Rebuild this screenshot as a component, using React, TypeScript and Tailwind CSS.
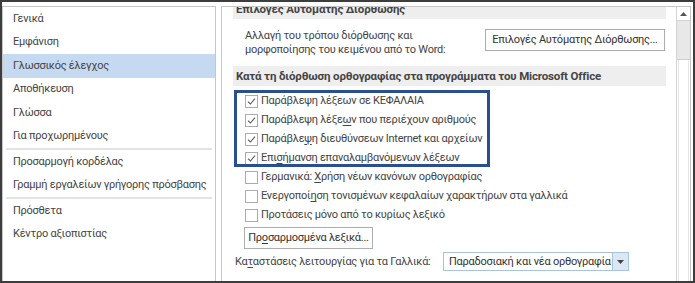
import { ReactNode } from "react";

const NAV_TOP = ["Γενικά", "Εμφάνιση", "Γλωσσικός έλεγχος", "Αποθήκευση", "Γλώσσα", "Για προχωρημένους"];
const NAV_MID = ["Προσαρμογή κορδέλας", "Γραμμή εργαλείων γρήγορης πρόσβασης"];
const NAV_BOT = ["Πρόσθετα", "Κέντρο αξιοπιστίας"];

const U = ({ children }: { children: ReactNode }) => (
  <span className="underline decoration-1 underline-offset-2">{children}</span>
);

const NavItem = ({ label, active }: { label: string; active?: boolean }) => (
  <div className={`flex h-[23.5px] items-center whitespace-nowrap pl-[10px] ${active ? "bg-[#c5d9f1]" : ""}`}>
    {label}
  </div>
);

const Separator = () => <div className="mx-[3px] h-[2px] bg-[#e3e3e3]" />;

const CheckBox = ({ checked }: { checked: boolean }) => (
  <span className="flex h-[13px] w-[13px] shrink-0 items-center justify-center border border-[#ababab] bg-white">
    {checked && (
      <svg width="9" height="9" viewBox="0 0 9 9" fill="none">
        <path d="M1 4.6 L3.4 7 L8 1.6" stroke="#5a5a5a" strokeWidth="1.1" />
      </svg>
    )}
  </span>
);

const CheckRow = ({ checked, children }: { checked: boolean; children: ReactNode }) => (
  <div className="flex h-[19px] items-center gap-[3px] pl-[23px]">
    <CheckBox checked={checked} />
    <span className="whitespace-nowrap">{children}</span>
  </div>
);

const SectionHeader = ({ children, className = "" }: { children: ReactNode; className?: string }) => (
  <div
    className={`ml-[11px] mr-[10px] flex items-center whitespace-nowrap bg-[#eeeeee] pl-[3px] text-[11.5px] font-bold tracking-[-0.15px] text-[#444] ${className}`}
  >
    {children}
  </div>
);

export default function App() {
  return (
    <div
      className="flex h-[283px] w-[695px] overflow-hidden border-2 border-[#3d3d3d] bg-white pt-[4px] text-[11px] leading-[14px] tracking-[-0.25px] text-[#444]"
      style={{ fontFamily: 'Roboto, "Liberation Sans", sans-serif' }}
    >
      {/* navigation list */}
      <div className="h-[300px] w-[214px] shrink-0 border border-[#c6c6c6]">
        {NAV_TOP.map((l) => (
          <NavItem key={l} label={l} active={l === "Γλωσσικός έλεγχος"} />
        ))}
        <Separator />
        {NAV_MID.map((l) => (
          <NavItem key={l} label={l} />
        ))}
        <Separator />
        {NAV_BOT.map((l) => (
          <NavItem key={l} label={l} />
        ))}
      </div>

      {/* options panel */}
      <div className="ml-[5px] mr-[2px] flex h-[300px] flex-1 overflow-hidden border border-[#c6c6c6]">
        <div className="flex-1">
          <SectionHeader className="-mt-[9px] h-[21px]">Επιλογές Αυτόματης Διόρθωσης</SectionHeader>

          <div className="mt-[10px] flex items-start">
            <p className="pl-[23px]">
              Αλλαγή του τρόπου διόρθωσης και
              <br />
              μορφοποίησης του κειμένου από το Word:
            </p>
            <button className="ml-auto mr-[11px] h-[22px] w-[180px] whitespace-nowrap border border-[#adadad] bg-[#fdfdfd] text-[#333]">
              Επιλογές Αυτόματης Διόρθωσης...
            </button>
          </div>

          <SectionHeader className="mt-[9px] h-[20px]">
            Κατά τη διόρθωση ορθογραφίας στα προγράμματα του Microsoft Office
          </SectionHeader>

          <div className="relative mt-[5.5px]">
            <CheckRow checked>Παράβλεψη λέξεων σε ΚΕΦΑΛΑΙΑ</CheckRow>
            <CheckRow checked>
              Παράβλεψη λέξε<U>ω</U>ν που περιέχουν αριθμούς
            </CheckRow>
            <CheckRow checked>
              Παράβλε<U>ψ</U>η διευθύνσεων Internet και αρχείων
            </CheckRow>
            <CheckRow checked>
              Επι<U>σ</U>ήμανση επαναλαμβανόμενων λέξεων
            </CheckRow>
            {/* annotation frame */}
            <div className="pointer-events-none absolute left-[12px] top-[-2px] h-[77px] w-[256px] border-[3px] border-[#2b4f8e]" />
          </div>
          <CheckRow checked={false}>
            Γερμανικά: <U>Χ</U>ρήση νέων κανόνων ορθογραφίας
          </CheckRow>
          <CheckRow checked={false}>
            Ενεργοποί<U>η</U>ση τονισμένων κεφαλαίων χαρακτήρων στα γαλλικά
          </CheckRow>
          <CheckRow checked={false}>Προτάσεις μόνο από το κυρίως λεξικό</CheckRow>

          <button className="ml-[22px] mt-[2.5px] h-[22px] w-[129px] whitespace-nowrap border border-[#adadad] bg-[#fdfdfd] text-[#333]">
            Πρ<U>ο</U>σαρμοσμένα λεξικά...
          </button>

          <div className="mt-[3px] flex items-center">
            <span className="w-[221px] shrink-0 whitespace-nowrap pl-[13px]">
              Κα<U>τ</U>αστάσεις λειτουργίας για τα Γαλλικά:
            </span>
            <div className="flex h-[19px] w-[186px] items-center border border-[#a9c2de] bg-white">
              <span className="flex-1 whitespace-nowrap pl-[5px] text-[#333]">Παραδοσιακή και νέα ορθογραφία</span>
              <span className="flex h-full w-[16px] items-center justify-center border-l border-[#a9c2de] bg-[#dce7f4]">
                <svg width="7" height="4" viewBox="0 0 7 4">
                  <path d="M0 0 H7 L3.5 4 Z" fill="#444" />
                </svg>
              </span>
            </div>
          </div>
        </div>

        {/* scrollbar */}
        <div className="flex w-[14px] shrink-0 flex-col border-l border-[#d4d4d4]">
          <div className="flex h-[14px] items-center justify-center border-b border-[#d4d4d4]">
            <svg width="7" height="4" viewBox="0 0 7 4">
              <path d="M0 4 H7 L3.5 0 Z" fill="#555" />
            </svg>
          </div>
          <div className="h-[39px] border-b border-[#cfcfcf] bg-[#e8e8e8]" />
          <div className="mx-[1px] flex-1 border-x border-[#e6e6e6]" />
        </div>
      </div>
    </div>
  );
}
